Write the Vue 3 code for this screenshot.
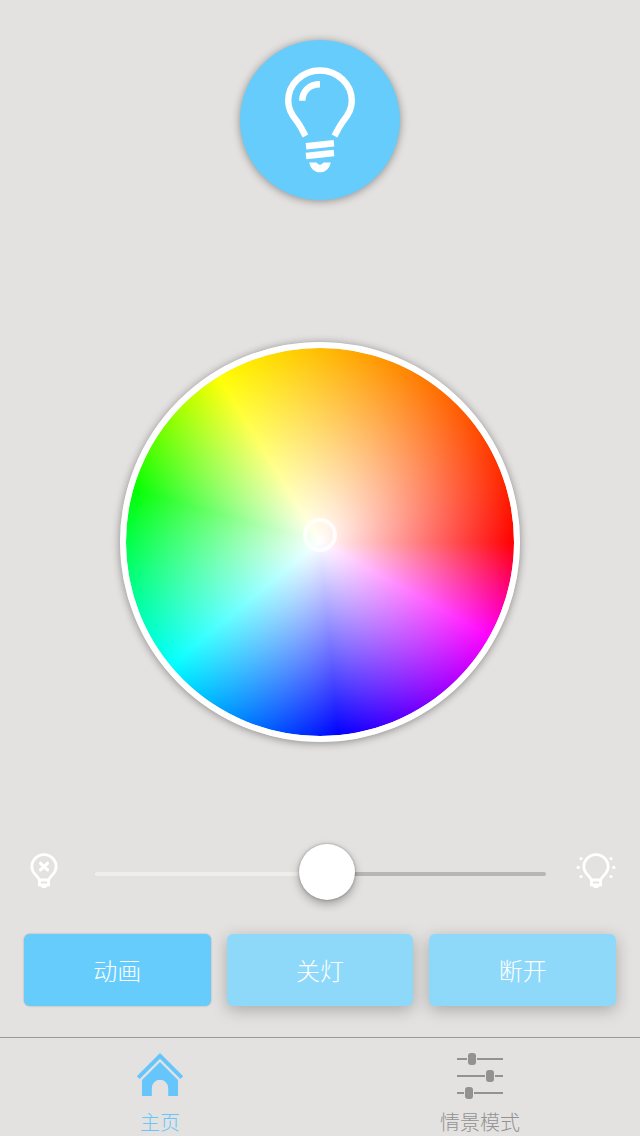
<script setup>
import { ref } from 'vue'

const actions = ['动画', '关灯', '断开']
const active = ref(0)
const level = ref(51.5)
</script>

<template>
  <main class="screen">
    <header class="top">
      <button class="power" aria-label="灯">
        <svg width="160" height="160" viewBox="0 0 160 160" fill="none" stroke="#fff">
          <path d="M65.5 96 C62 89.500 60 85 56 80 C51.500 74.500 48.200 69 48.200 61 A31.800 30.500 0 0 1 111.800 61 C111.800 69 108.500 74.500 104 80 C100 85 98 89.500 94.500 96" stroke-width="6.400" />
          <path d="M62.300 60.800 C62.300 51 69.500 44.300 80 44.300" stroke-width="6.400" />
          <path d="M66 106.200 L94 103.200 M66 116 L94 113" stroke-width="6.400" />
          <path d="M69.300 122.500 H76.500 Q80 127 83.500 122.500 H90.700 C89.500 128.800 85.500 132.300 80 132.300 C74.500 132.300 70.500 128.800 69.300 122.500 Z" fill="#fff" stroke="none" />
        </svg>
      </button>
    </header>

    <section class="picker">
      <div class="wheel"><span class="marker"></span></div>
    </section>

    <section class="brightness">
      <svg class="bulb" width="40" height="40" viewBox="0 0 40 40" fill="none" stroke="#fff" stroke-width="2.800">
        <path d="M15.200 28 C14.800 23.800 7.800 22 7.800 14.800 A12.200 12.200 0 0 1 32.200 14.800 C32.200 22 25.200 23.800 24.800 28" />
        <path d="M14 28 H26 M15.500 27 V34 M24.500 27 V34 M15 33 H25" />
        <path d="M16.500 33 H23.500 L22 36 H18 Z" fill="#fff" stroke="none" />
        <path d="M16.500 11.300 L23.500 17.800 M23.500 11.300 L16.500 17.800" stroke-width="3.200" stroke-linecap="round" />
      </svg>
      <div class="slider">
        <div class="track"><div class="fill" :style="{ width: level + '%' }"></div></div>
        <div class="knob" :style="{ left: level + '%' }"></div>
      </div>
      <svg class="bulb" width="40" height="40" viewBox="0 0 40 40" fill="none" stroke="#fff" stroke-width="2.800">
        <path d="M15.200 28 C14.800 23.800 7.800 22 7.800 14.800 A12.200 12.200 0 0 1 32.200 14.800 C32.200 22 25.200 23.800 24.800 28" />
        <path d="M14 28 H26 M15.500 27 V34 M24.500 27 V34 M15 33 H25" />
        <path d="M16.500 33 H23.500 L22 36 H18 Z" fill="#fff" stroke="none" />
        <g fill="#fff" stroke="none">
          <circle cx="2.200" cy="15.500" r="1.700" /><circle cx="37.800" cy="15.500" r="1.700" />
          <circle cx="5" cy="6.500" r="1.600" /><circle cx="35" cy="6.500" r="1.600" />
          <circle cx="5" cy="24.500" r="1.600" /><circle cx="35" cy="24.500" r="1.600" />
        </g>
      </svg>
    </section>

    <section class="actions">
      <button
        v-for="(label, i) in actions"
        :key="label"
        class="action"
        :class="{ active: active === i }"
        @click="active = i"
      >{{ label }}</button>
    </section>

    <nav class="tabs">
      <a class="tab current">
        <svg width="48" height="48" viewBox="0 0 48 48" fill="#66c6fb">
          <path d="M24 1 L47.200 24.200 L44.300 27.100 L24 6.800 L3.700 27.100 L0.800 24.200 Z" />
          <path d="M24 10 L42 28 V44 H32.200 V36 A8.200 8.200 0 0 0 15.800 36 V44 H6 V28 Z" />
        </svg>
        <span>主页</span>
      </a>
      <a class="tab">
        <svg width="48" height="48" viewBox="0 0 48 48" fill="#929292">
          <path d="M1 6 H11 V8 H1 Z M21 6 H47 V8 H21 Z M1 23 H29 V25 H1 Z M39 23 H47 V25 H39 Z M1 40 H8 V42 H1 Z M18 40 H47 V42 H18 Z" />
          <rect x="12" y="1" width="8" height="12" rx="3" />
          <rect x="30" y="18" width="8" height="12" rx="3" />
          <rect x="9" y="35" width="8" height="12" rx="3" />
        </svg>
        <span>情景模式</span>
      </a>
    </nav>
  </main>
</template>

<style>
body {
  background: #e3e2e0;
}
</style>

<style scoped>
.screen {
  box-sizing: border-box;
  width: 640px;
  height: 1136px;
  overflow: hidden;
  display: flex;
  flex-direction: column;
  background: #e3e2e0;
  font-family: "Noto Sans CJK SC", sans-serif;
  font-weight: 300;
}
button {
  padding: 0;
  border: 0;
  font: inherit;
}
.top {
  height: 302px;
  padding-top: 40px;
  display: flex;
  justify-content: center;
  align-items: flex-start;
}
.power {
  width: 160px;
  height: 160px;
  border-radius: 50%;
  background: #66ccfc;
  box-shadow: 0 1px 8px rgba(0, 0, 0, 0.38);
}
.power svg {
  display: block;
}
.picker {
  display: flex;
  justify-content: center;
}
.wheel {
  box-sizing: border-box;
  position: relative;
  width: 400px;
  height: 400px;
  border: 6px solid #fff;
  border-radius: 50%;
  background:
    radial-gradient(circle closest-side, #fff, rgba(255, 255, 255, 0)) padding-box,
    conic-gradient(from 90deg, #f00 0deg, #f0f 29deg, #00f 84.500deg, #0ff 140.500deg, #0f0 195.500deg, #ff0 238.500deg, #f00 360deg) padding-box;
  box-shadow: 0 1px 8px rgba(0, 0, 0, 0.4);
}
.marker {
  box-sizing: border-box;
  position: absolute;
  left: 177px;
  top: 170px;
  width: 34px;
  height: 34px;
  border: 4px solid rgba(255, 255, 255, 0.82);
  border-radius: 50%;
}
.brightness {
  display: flex;
  align-items: center;
  justify-content: space-between;
  height: 60px;
  margin-top: 102px;
  padding: 0 24px;
}
.bulb {
  flex: none;
  margin-top: -4px;
  overflow: visible;
}
.slider {
  position: relative;
  width: 452px;
}
.track {
  height: 4px;
  border-radius: 2px;
  background: #b6b6b4;
}
.fill {
  height: 4px;
  border-radius: 2px;
  background: #efeee9;
}
.knob {
  position: absolute;
  top: 50%;
  width: 56px;
  height: 56px;
  border-radius: 50%;
  background: #fff;
  box-shadow: 0 4px 10px rgba(0, 0, 0, 0.3), 0 0 3px rgba(0, 0, 0, 0.3);
  transform: translate(-50%, -30px);
}
.actions {
  display: flex;
  gap: 16px;
  margin-top: 30px;
  padding: 0 24px;
}
.action {
  flex: 1;
  height: 72px;
  border-radius: 6px;
  background: #8ed9fa;
  box-shadow: 0 4px 16px rgba(0, 0, 0, 0.25);
  color: #fff;
  font-size: 24px;
  line-height: 72px;
}
.action.active {
  background: #66ccfc;
  box-shadow: 0 0 2px rgba(0, 0, 0, 0.3);
}
.tabs {
  display: flex;
  margin-top: 31px;
  height: 98px;
  border-top: 1px solid #999;
}
.tab {
  flex: 1;
  display: flex;
  flex-direction: column;
  align-items: center;
  padding-top: 14px;
  color: #929292;
  font-size: 20px;
  line-height: 28px;
}
.tab span {
  margin-top: 8px;
}
.tab.current {
  color: #66c6fb;
}
</style>
